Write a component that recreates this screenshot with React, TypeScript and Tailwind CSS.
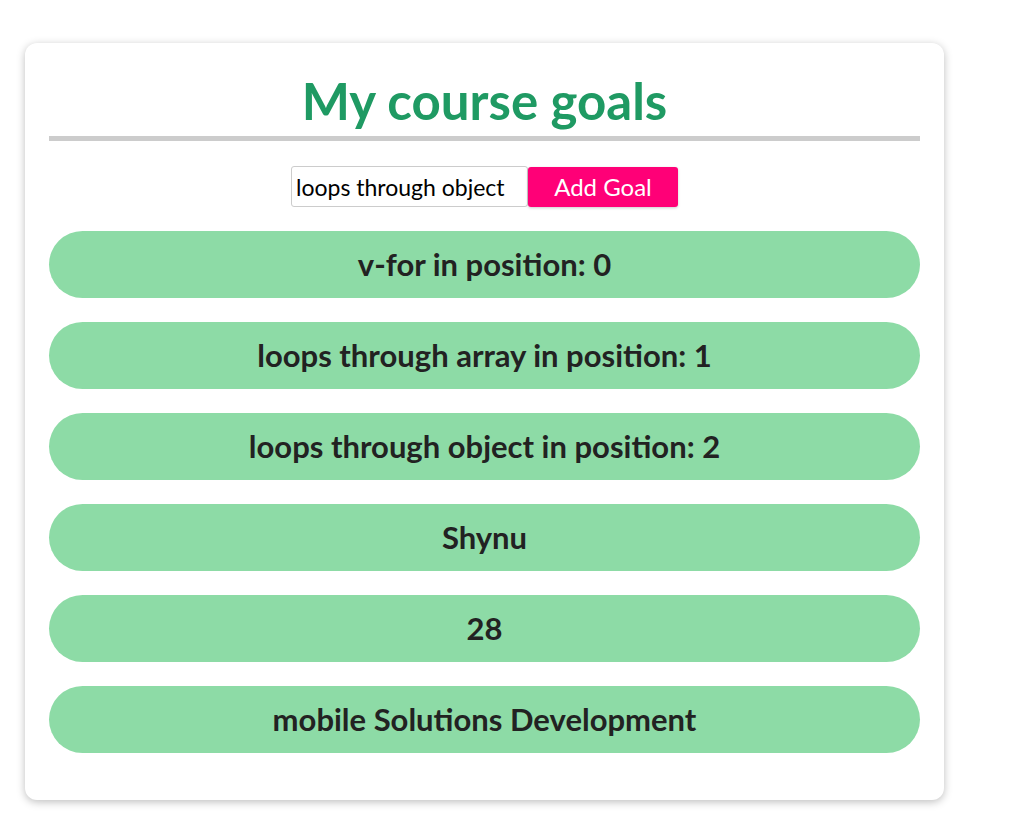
import React from "react";

const goals = [
  "v-for in position: 0",
  "loops through array in position: 1",
  "loops through object in position: 2",
  "Shynu",
  "28",
  "mobile Solutions Development",
];

export default function App() {
  return (
    <div className="min-h-[835px] bg-white pt-[43px] pl-[25px]" style={{ fontFamily: "Lato, 'Noto Sans', sans-serif" }}>
      <div className="w-[919px] rounded-xl bg-white px-6 pb-[47px] shadow-[0_2px_8px_rgba(0,0,0,0.26)]">
        <h2 className="flex h-[98px] items-end justify-center border-b-[5px] border-[#cccccc] pb-[10px] text-[51px] font-bold leading-none text-[#1f9a63]">
          My course goals
        </h2>
        <div className="mt-[25px] flex justify-center">
          <input
            type="text"
            defaultValue="loops through object"
            className="h-[41px] w-[237px] rounded-[3px] border border-[#cccccc] px-[4px] text-[23px] text-black outline-none"
          />
          <button className="mt-px h-[40px] w-[150px] rounded-[3px] bg-[#ff0077] text-[24px] text-white shadow-[0_1px_3px_rgba(0,0,0,0.2)]">
            Add Goal
          </button>
        </div>
        <ul className="mt-6 flex flex-col gap-6">
          {goals.map((g) => (
            <li
              key={g}
              className="flex h-[67px] items-center justify-center rounded-full bg-[#8ddba6] text-[31px] font-bold text-[#222222]"
            >
              {g}
            </li>
          ))}
        </ul>
      </div>
    </div>
  );
}
